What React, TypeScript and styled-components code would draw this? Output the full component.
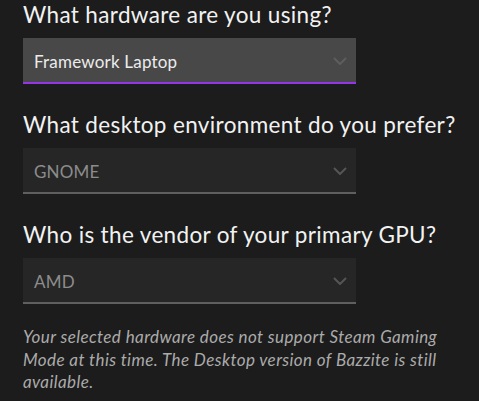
import React from "react";
import styled, { createGlobalStyle } from "styled-components";

const Global = createGlobalStyle`
  html, body { margin: 0; padding: 0; background: #1c1c1c; }
  body { font-family: "Lato", "Inter", sans-serif; }
`;

const Page = styled.div`
  width: 479px;
  height: 401px;
  overflow: hidden;
  background: #1c1c1c;
  padding: 0 0 0 23px;
  box-sizing: border-box;
  display: flex;
  flex-direction: column;
`;

const Section = styled.section`
  display: flex;
  flex-direction: column;
  gap: 8px;
  margin-bottom: 26px;
`;

const Question = styled.h2`
  margin: 0;
  font-size: 22.5px;
  font-weight: 400;
  line-height: 30px;
  color: #f2f2f2;
  letter-spacing: 0.35px;
  white-space: nowrap;
`;

const Select = styled.div<{ $active?: boolean }>`
  width: 333px;
  height: 46px;
  box-sizing: border-box;
  display: flex;
  align-items: center;
  justify-content: space-between;
  padding: 0 9px 0 11px;
  background: ${(p) => (p.$active ? "#484848" : "#262626")};
  border-bottom: 2px solid ${(p) => (p.$active ? "#9334e6" : "#5f5f5f")};
`;

const Value = styled.span<{ $active?: boolean }>`
  font-size: 17px;
  color: ${(p) => (p.$active ? "#ececec" : "#8c8c8c")};
  padding-top: 2px;
  letter-spacing: 0.2px;
`;

const Chevron = styled.svg<{ $active?: boolean }>`
  width: 14px;
  height: 8px;
  color: ${(p) => (p.$active ? "#5e5e5e" : "#555555")};
  margin-top: 2px;
`;

const Note = styled.p`
  margin: 0;
  margin-top: -4px;
  width: 416px;
  font-size: 17px;
  font-style: italic;
  line-height: 22.5px;
  color: #ababab;
  letter-spacing: 0.4px;
`;

const Arrow = ({ active }: { active?: boolean }) => (
  <Chevron $active={active} viewBox="0 0 14 8" fill="none">
    <path d="M1 1 L7 7 L13 1" stroke="currentColor" strokeWidth="2" />
  </Chevron>
);

const Field = ({ q, v, active }: { q: string; v: string; active?: boolean }) => (
  <Section>
    <Question>{q}</Question>
    <Select $active={active}>
      <Value $active={active}>{v}</Value>
      <Arrow active={active} />
    </Select>
  </Section>
);

export default function App() {
  return (
    <Page>
      <Global />
      <Field q="What hardware are you using?" v="Framework Laptop" active />
      <Field q="What desktop environment do you prefer?" v="GNOME" />
      <Field q="Who is the vendor of your primary GPU?" v="AMD" />
      <Note>
        Your selected hardware does not support Steam Gaming Mode at this time. The Desktop version of
        Bazzite is still available.
      </Note>
    </Page>
  );
}
